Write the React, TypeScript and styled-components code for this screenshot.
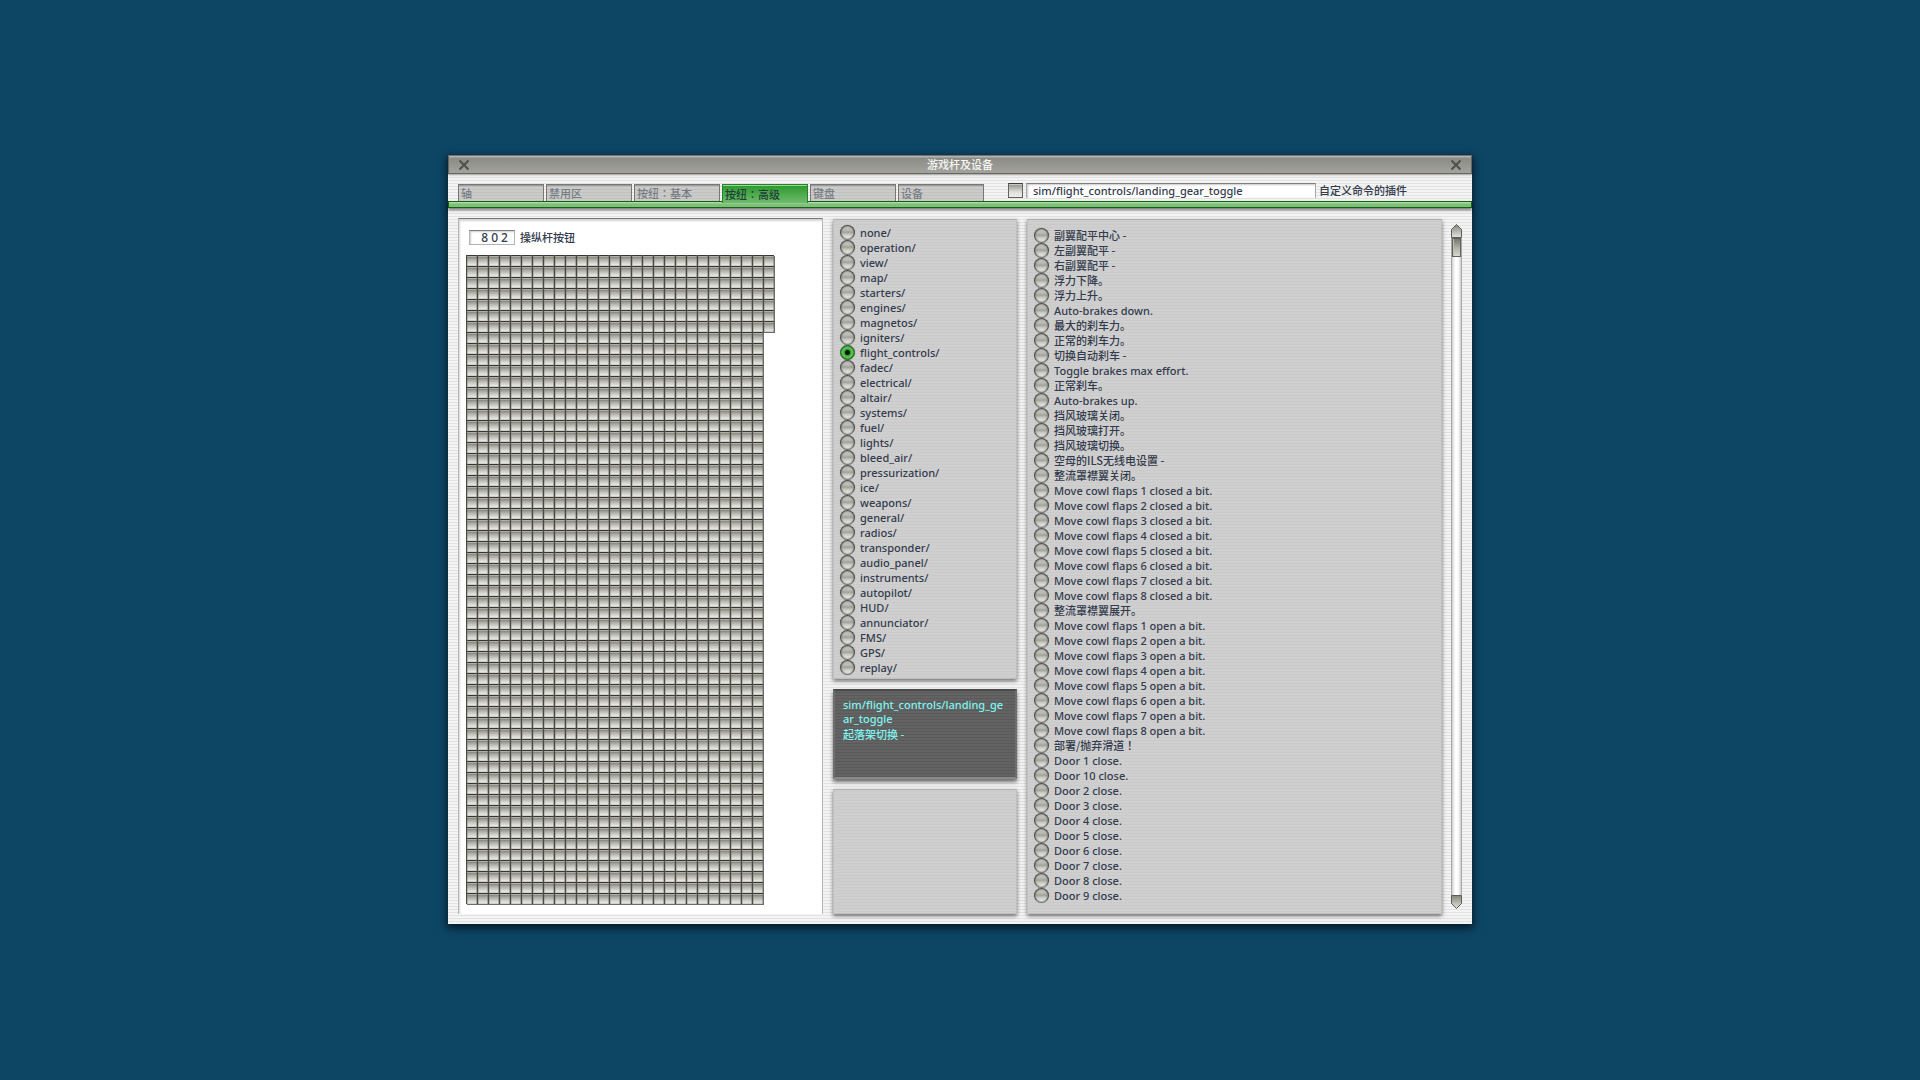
import React, { useState } from 'react';
import styled, { createGlobalStyle, css } from 'styled-components';

const GlobalStyle = createGlobalStyle`
  *, *::before, *::after { box-sizing: border-box; }
  body {
    margin: 0;
    background: #0d4565;
    color: #333b4c;
    font: 500 11px/15px "Noto Sans", "Noto Sans CJK JP", "Noto Sans CJK SC", sans-serif;
  }
  button, input { font: inherit; color: inherit; margin: 0; }
`;

const cjkFont = css`
  font: 500 11px/15px "Noto Sans CJK JP", "Noto Sans CJK SC", sans-serif;
`;

const pinstripe = css`
  background-image: repeating-linear-gradient(180deg, #f4f4f4 0 1px, #e2e2e2 1px 2px, #f4f4f4 2px 3px);
`;

const Desktop = styled.div`
  display: flex;
  align-items: center;
  justify-content: center;
  min-height: 100vh;
  padding-bottom: 1px;
`;

const Window = styled.main`
  display: flex;
  flex-direction: column;
  width: 1024px;
  max-width: 100%;
  ${pinstripe}
  box-shadow: 0 3px 8px 1px rgba(0, 0, 0, 0.65);
`;

const TitleBar = styled.header`
  display: flex;
  align-items: center;
  justify-content: space-between;
  height: 19px;
  padding: 0 9px;
  border: 1px solid #666664;
  border-top-color: #72726f;
  background: linear-gradient(180deg, #b4b4ae 0 1px, #8c8c86 2px, #a3a39c 100%);
  box-shadow: 0 1px 2px rgba(0, 0, 0, 0.3);
`;

const Title = styled.h1`
  margin: 0;
  color: #f6f6f4;
  ${cjkFont}
`;

const CloseButton = styled.button`
  display: flex;
  padding: 0;
  border: 0;
  background: none;
`;

const Toolbar = styled.div`
  display: flex;
  align-items: flex-end;
  height: 27px;
  padding: 0 10px;
`;

const Tabs = styled.nav`
  display: flex;
  gap: 2px;
  height: 17px;
`;

const Tab = styled.button<{ $active?: boolean }>`
  width: 86px;
  height: 17px;
  padding: 1px 0 0 2px;
  border: 1px solid #777775;
  border-bottom: 0;
  background: repeating-linear-gradient(180deg, #cbcbc9 0 1px, #c0c0be 1px 2px, #cbcbc9 2px 3px);
  box-shadow: inset 0 2px 1px -1px #989896;
  color: #777d87;
  ${cjkFont}
  text-align: left;
  white-space: nowrap;
  ${({ $active }) => $active && css`
    z-index: 1;
    position: relative;
    height: 19px;
    padding-top: 0;
    border-color: #23822a;
    background: linear-gradient(180deg, #2c992d, #6fbb6b);
    box-shadow: inset 0 2px 0 -1px #9bd597;
    color: #213f3a;
  `}
`;

const Command = styled.div`
  display: flex;
  align-items: center;
  gap: 3px;
  flex: 1;
  padding: 0 0 3px 24px;
`;

const CheckBox = styled.input`
  appearance: none;
  width: 15px;
  height: 15px;
  border: 1px solid #62625f;
  border-top-color: #3e3e3b;
  background: linear-gradient(180deg, #8e8e8a, #deded9 60%, #ececea);
  box-shadow: inset 0 1px 0 #c8c8c2;
`;

const CommandField = styled.input`
  width: 290px;
  height: 15px;
  padding: 0 6px 1px;
  border: 1px solid #aaa;
  border-top-color: #7d7d7d;
  border-bottom: 0;
  background: #fff;
  box-shadow: inset 1px 1px 2px #c8c8c8;
  line-height: 13px;
`;

const CjkLabel = styled.label`
  ${cjkFont}
`;

const GreenRule = styled.div`
  height: 7px;
  border: 1px solid #0e650f;
  background: linear-gradient(180deg, #a3dc9f 0 1px, #82bd7d 2px 100%);
  box-shadow: 0 2px 3px rgba(0, 0, 0, 0.5);
`;

const Body = styled.div`
  display: flex;
  gap: 10px;
  padding: 11px 10px 10px;
`;

const DevicePanel = styled.section`
  width: 365px;
  margin-top: -1px;
  padding: 11px 7px 0;
  border: 1px solid #b8b8b8;
  border-top-color: #777;
  border-bottom: 0;
  background: #fff;
  box-shadow: inset 1px 2px 2px #d4d4d4;
`;

const CountRow = styled.div`
  display: flex;
  align-items: center;
  gap: 5px;
  padding-left: 3px;
`;

const CountField = styled.input`
  width: 46px;
  height: 15px;
  padding: 0 6px 0 0;
  border: 1px solid #b4b4b4;
  border-top-color: #7d7d7d;
  background: #fff;
  box-shadow: inset 1px 1px 2px #ccc;
  font-size: 12px;
  line-height: 13px;
  text-align: right;
`;

const ButtonGrid = styled.div`
  display: grid;
  grid-auto-flow: column;
  grid-template-rows: repeat(59, 11px);
  grid-auto-columns: 11px;
  margin-top: 10px;
`;

const StickButton = styled.button`
  padding: 0;
  border: 0;
  background: linear-gradient(180deg, #353531 0 1px, #b0b0a8 1px 2px, #85857d 2px, #a6a69e 4px, #cacac5 7px, #e8e8e4 10px, #b4b4ae 11px);
  box-shadow:
    inset 1px 0 0 #4a4a45,
    inset 2px 0 0 rgba(110, 110, 100, 0.3),
    inset -1px 0 0 rgba(100, 100, 92, 0.4),
    1px 1px 0 #6c6c68;
`;

const MiddleColumn = styled.div`
  display: flex;
  flex-direction: column;
  gap: 10px;
  width: 184px;
`;

const panelSurface = css`
  border: 1px solid #c0c0c0;
  border-top-color: #b0b0b0;
  background: repeating-linear-gradient(180deg, #cfcfcf 0 1px, #cacaca 1px 2px, #cfcfcf 2px 3px);
  box-shadow: 0 2px 4px rgba(0, 0, 0, 0.55);
`;

const GroupPanel = styled.fieldset`
  min-width: 0;
  margin: 0;
  padding: 5px 6px 3px;
  height: 460px;
  ${panelSurface}
`;

const RightSide = styled.div`
  display: flex;
  flex: 1;
  gap: 9px;
`;

const CommandPanel = styled.fieldset`
  flex: 1;
  min-width: 0;
  margin: 0;
  padding: 8px 6px 10px;
  ${panelSurface}
`;

const EmptyPanel = styled.section`
  flex: 1;
  ${panelSurface}
`;

const Readout = styled.section`
  height: 90px;
  padding: 7px 8px;
  border: 2px solid #6e6e6e;
  border-top-color: #4a4a4a;
  border-bottom-color: #8a8a8a;
  background: repeating-linear-gradient(180deg, #636363 0 1px, #5a5a5a 1px 2px, #636363 2px 3px);
  box-shadow: 0 3px 4px rgba(0, 0, 0, 0.55);
  color: #7ff4f0;
`;

const ReadoutText = styled.p`
  margin: 0;
  line-height: 14px;
  word-break: break-all;
`;

const ReadoutCaption = styled.p`
  margin: 1px 0 0;
  ${cjkFont}
`;

const Option = styled.label`
  display: flex;
  align-items: center;
  gap: 5px;
  height: 15px;
  white-space: nowrap;
`;

const OptionText = styled.span<{ $cjk?: boolean }>`
  ${({ $cjk }) => $cjk && cjkFont}
`;

const Radio = styled.input`
  appearance: none;
  flex: none;
  width: 15px;
  height: 15px;
  border: 1px solid #4c4c48;
  border-bottom-color: #74746f;
  border-radius: 50%;
  background: linear-gradient(180deg, #c8c8c4, #bcbcb6 30%, #a2a29c 48%, #c8c8c2 65%, #f6f6f4);
  box-shadow: 0 0 1px #8a8a86, inset 0 0 2px #62625e;
  &:checked {
    border-color: #1c5a1a;
    background: radial-gradient(circle, #071a06 0 2px, #3a9a35 3px, #5cd653 5px, #2f8a2b 7px);
  }
`;

const Scroller = styled.div`
  display: flex;
  flex-direction: column;
  width: 11px;
  margin: 5px 0;
`;

const ScrollTrack = styled.div`
  flex: 1;
  border: solid #a8a8a8;
  border-width: 0 1px;
  background: linear-gradient(90deg, #cfcfcf, #fff 35% 65%, #cfcfcf);
`;

const ScrollThumb = styled.div`
  height: 19px;
  border: 1px solid #62625d;
  background: linear-gradient(180deg, #77776f, #b4b4ad 55%, #d8d8d2);
  box-shadow: inset 1px 0 0 #bdbdb5;
`;

const ScrollButton = styled.button`
  display: flex;
  padding: 0;
  border: 0;
  background: none;
`;

const CrossIcon = () => (
  <svg width="12" height="12" viewBox="0 0 12 12" fill="none" stroke="#4e4e4b" strokeWidth="2">
    <path d="M1.5 1.5 10.5 10.5M10.5 1.5 1.5 10.5" />
  </svg>
);

const ArrowIcon = ({ down }: { down?: boolean }) => (
  <svg width="11" height="14" viewBox="0 0 11 14">
    <defs>
      <linearGradient id={down ? 'arrow-down' : 'arrow-up'} x1="0" y1="0" x2="0" y2="1">
        <stop offset="0" stopColor="#85857c" />
        <stop offset="1" stopColor="#e4e4df" />
      </linearGradient>
    </defs>
    <path
      d={down ? 'M.5.5H10.5V8.5L5.5 13.5.5 8.5Z' : 'M.5 13.5V5.5L5.5.5 10.5 5.5V13.5Z'}
      fill={down ? 'url(#arrow-down)' : 'url(#arrow-up)'}
      stroke="#5c5c56"
    />
  </svg>
);

const tabs = ['轴', '禁用区', '按纽：基本', '按纽：高级', '键盘', '设备'];

const groups = [
  'none/', 'operation/', 'view/', 'map/', 'starters/', 'engines/', 'magnetos/', 'igniters/',
  'flight_controls/', 'fadec/', 'electrical/', 'altair/', 'systems/', 'fuel/', 'lights/',
  'bleed_air/', 'pressurization/', 'ice/', 'weapons/', 'general/', 'radios/', 'transponder/',
  'audio_panel/', 'instruments/', 'autopilot/', 'HUD/', 'annunciator/', 'FMS/', 'GPS/', 'replay/',
];

const numbered = (count: number, text: (n: number) => string) =>
  Array.from({ length: count }, (_, i) => text(i + 1));

const commands = [
  '副翼配平中心 -', '左副翼配平 -', '右副翼配平 -', '浮力下降。', '浮力上升。', 'Auto-brakes down.',
  '最大的刹车力。', '正常的刹车力。', '切换自动刹车 -', 'Toggle brakes max effort.', '正常刹车。',
  'Auto-brakes up.', '挡风玻璃关闭。', '挡风玻璃打开。', '挡风玻璃切换。', '空母的ILS无线电设置 -',
  '整流罩襟翼关闭。',
  ...numbered(8, (n) => `Move cowl flaps ${n} closed a bit.`),
  '整流罩襟翼展开。',
  ...numbered(8, (n) => `Move cowl flaps ${n} open a bit.`),
  '部署/抛弃滑道！',
  'Door 1 close.', 'Door 10 close.',
  ...numbered(8, (n) => `Door ${n + 1} close.`),
];

const isCjk = (text: string) => /[\u4e00-\u9fff]/.test(text);

const STICK_BUTTONS = 1600;

export default function App() {
  const [tab, setTab] = useState(3);
  const [group, setGroup] = useState('flight_controls/');

  return (
    <Desktop>
      <GlobalStyle />
      <Window>
        <TitleBar>
          <CloseButton aria-label="关闭"><CrossIcon /></CloseButton>
          <Title>游戏杆及设备</Title>
          <CloseButton aria-label="关闭"><CrossIcon /></CloseButton>
        </TitleBar>
        <Toolbar>
          <Tabs>
            {tabs.map((name, i) => (
              <Tab key={name} $active={i === tab} onClick={() => setTab(i)}>{name}</Tab>
            ))}
          </Tabs>
          <Command>
            <CheckBox type="checkbox" id="custom" aria-label="自定义命令" />
            <CommandField id="command" defaultValue="sim/flight_controls/landing_gear_toggle" />
            <CjkLabel htmlFor="command">自定义命令的插件</CjkLabel>
          </Command>
        </Toolbar>
        <GreenRule />
        <Body>
          <DevicePanel>
            <CountRow>
              <CountField id="count" defaultValue="8 0 2" />
              <CjkLabel htmlFor="count">操纵杆按钮</CjkLabel>
            </CountRow>
            <ButtonGrid>
              {Array.from({ length: STICK_BUTTONS }, (_, i) => (
                <StickButton key={i} aria-label={`${i}`} />
              ))}
            </ButtonGrid>
          </DevicePanel>
          <MiddleColumn>
            <GroupPanel>
              {groups.map((name) => (
                <Option key={name}>
                  <Radio type="radio" name="group" checked={name === group} onChange={() => setGroup(name)} />
                  <OptionText>{name}</OptionText>
                </Option>
              ))}
            </GroupPanel>
            <Readout>
              <ReadoutText>sim/flight_controls/landing_gear_toggle</ReadoutText>
              <ReadoutCaption>起落架切换 -</ReadoutCaption>
            </Readout>
            <EmptyPanel />
          </MiddleColumn>
          <RightSide>
            <CommandPanel>
              {commands.map((name) => (
                <Option key={name}>
                  <Radio type="radio" name="command" />
                  <OptionText $cjk={isCjk(name)}>{name}</OptionText>
                </Option>
              ))}
            </CommandPanel>
            <Scroller>
              <ScrollButton aria-label="向上"><ArrowIcon /></ScrollButton>
              <ScrollTrack><ScrollThumb /></ScrollTrack>
              <ScrollButton aria-label="向下"><ArrowIcon down /></ScrollButton>
            </Scroller>
          </RightSide>
        </Body>
      </Window>
    </Desktop>
  );
}
